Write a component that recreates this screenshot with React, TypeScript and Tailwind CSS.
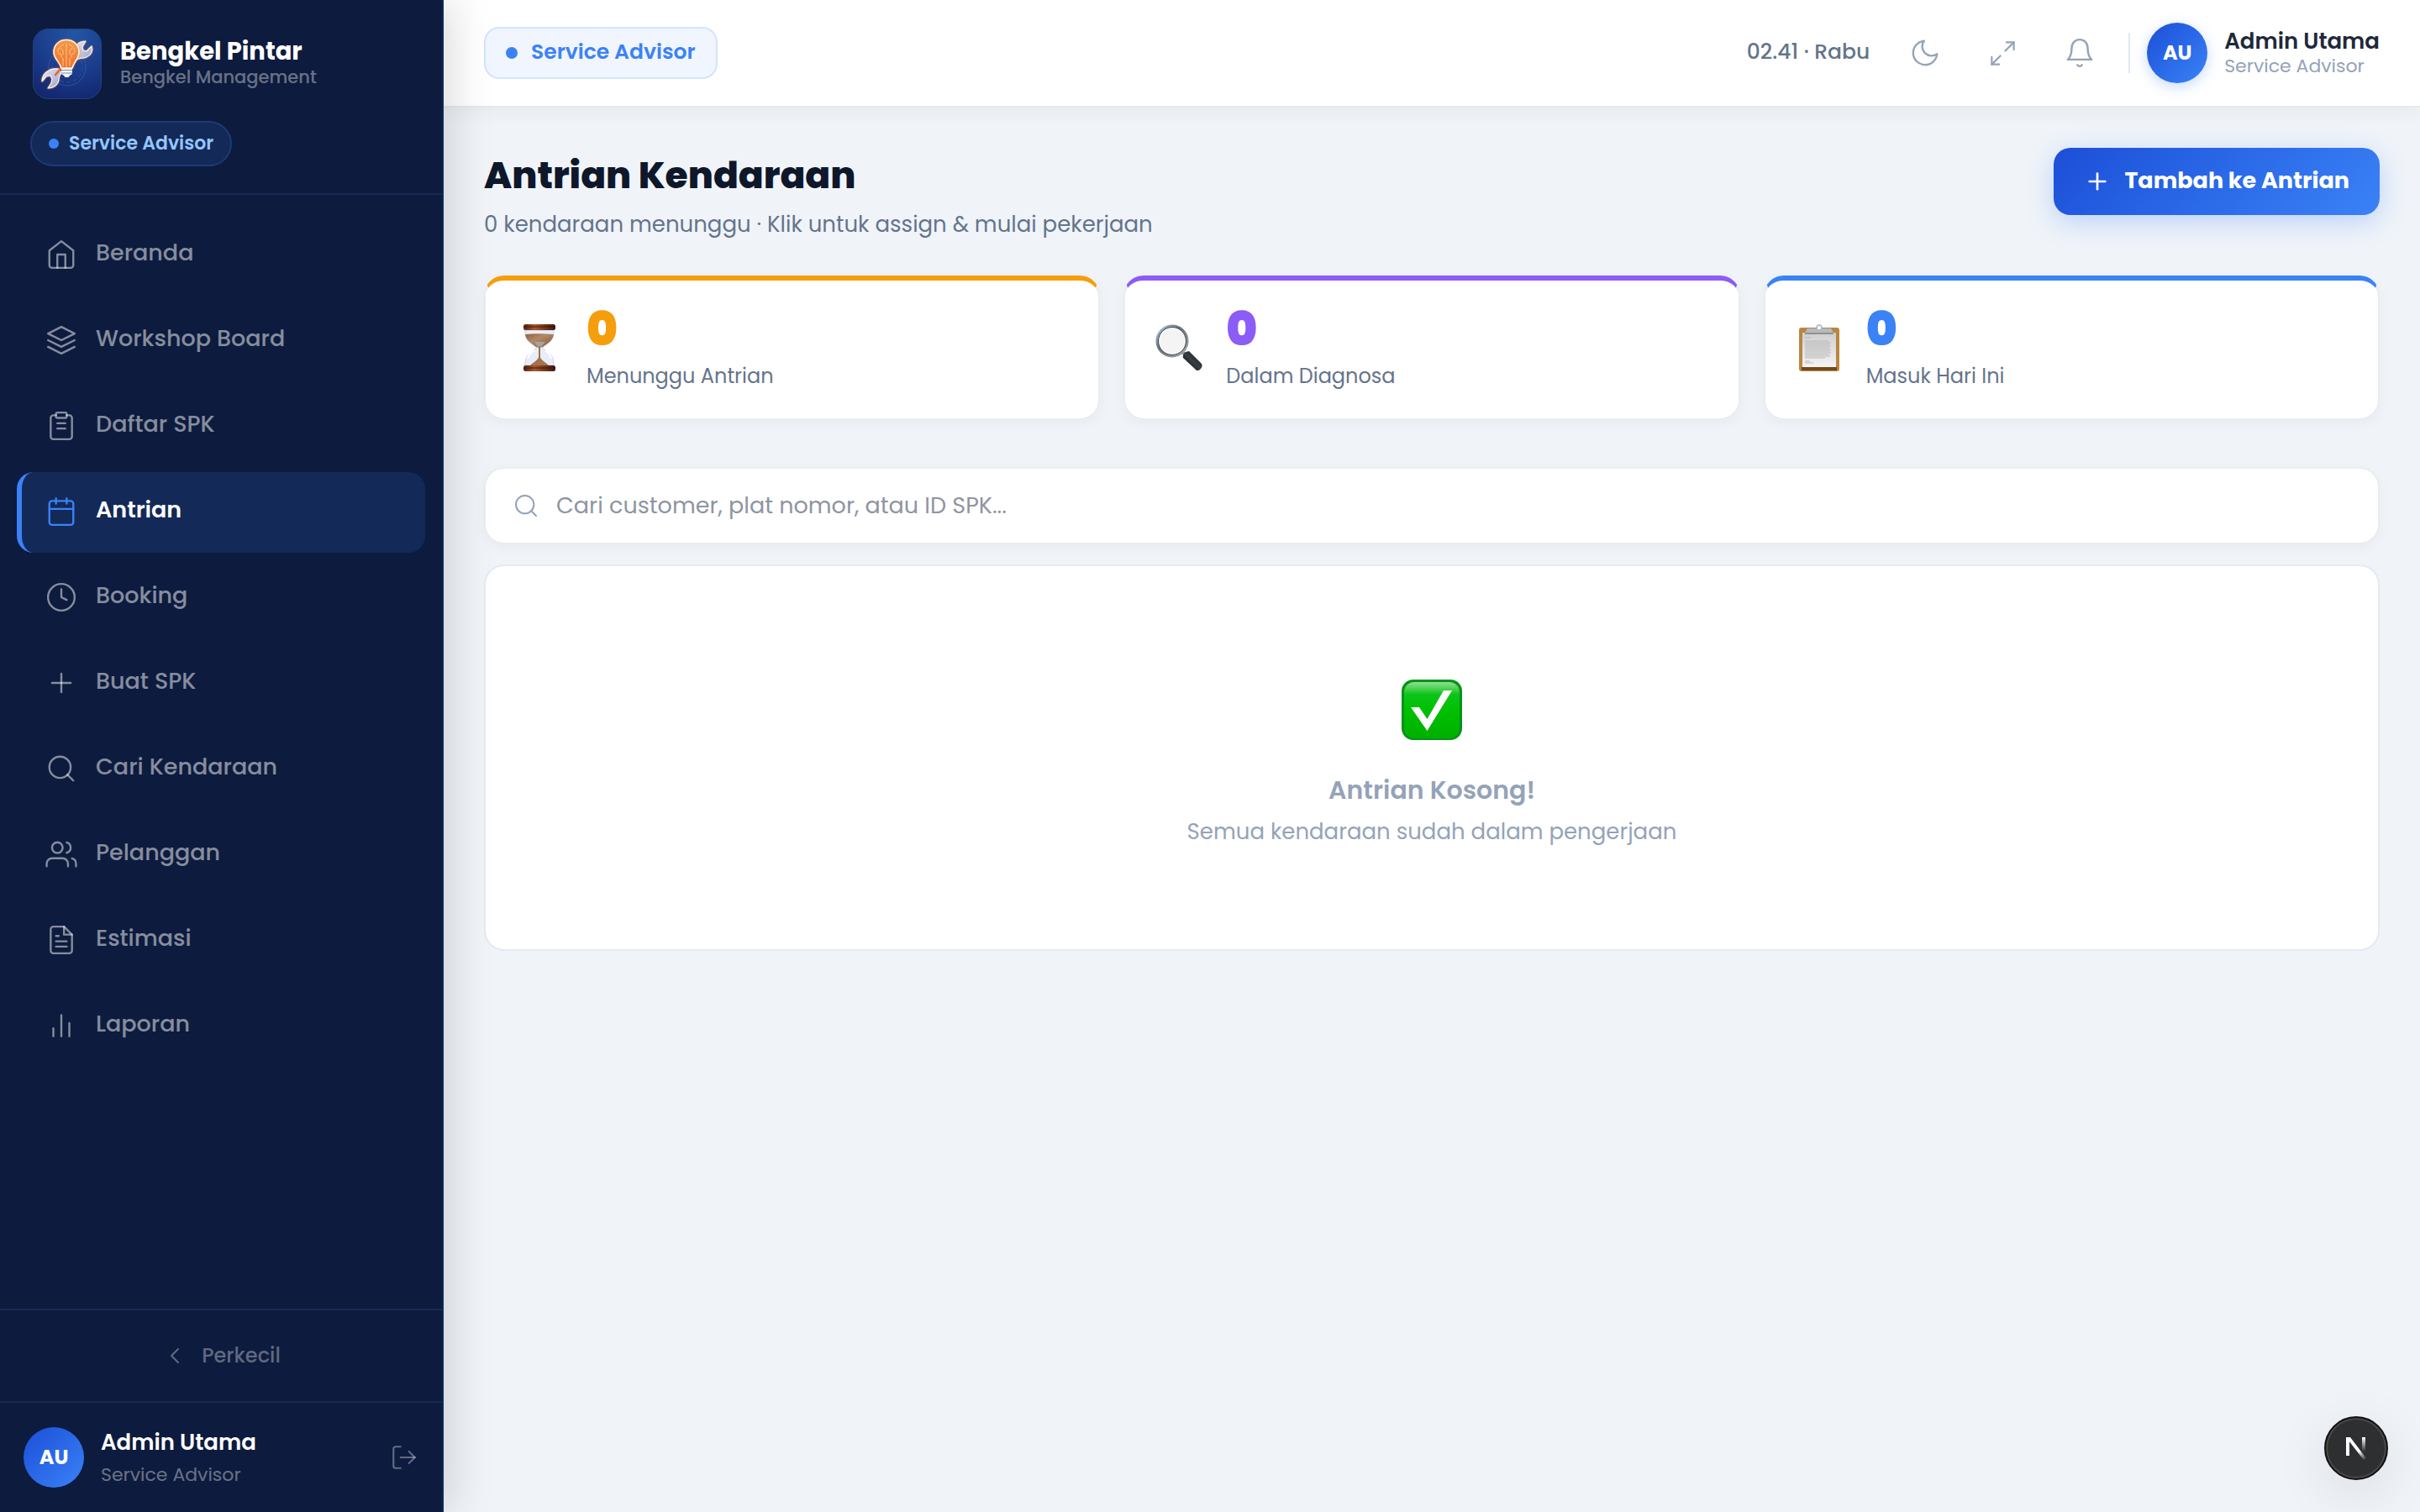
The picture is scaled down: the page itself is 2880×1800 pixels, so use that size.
import type { ReactNode, SVGProps } from "react";

type IconProps = SVGProps<SVGSVGElement>;

function Icon({ children, strokeWidth = 1.5, ...props }: IconProps) {
  return (
    <svg
      viewBox="0 0 24 24"
      fill="none"
      stroke="currentColor"
      strokeWidth={strokeWidth}
      strokeLinecap="round"
      strokeLinejoin="round"
      aria-hidden="true"
      {...props}
    >
      {children}
    </svg>
  );
}

const HomeIcon = (p: IconProps) => (
  <Icon {...p}>
    <path d="M3 9l9-7 9 7v11a2 2 0 0 1-2 2H5a2 2 0 0 1-2-2z" />
    <polyline points="9 22 9 12 15 12 15 22" />
  </Icon>
);

const LayersIcon = (p: IconProps) => (
  <Icon {...p}>
    <polygon points="12 2 2 7 12 12 22 7 12 2" />
    <polyline points="2 17 12 22 22 17" />
    <polyline points="2 12 12 17 22 12" />
  </Icon>
);

const ClipboardIcon = (p: IconProps) => (
  <Icon {...p}>
    <path d="M16 4h2a2 2 0 0 1 2 2v14a2 2 0 0 1-2 2H6a2 2 0 0 1-2-2V6a2 2 0 0 1 2-2h2" />
    <rect x="8" y="2" width="8" height="4" rx="1" />
    <path d="M9 10h6M9 14h6" />
  </Icon>
);

const CalendarIcon = (p: IconProps) => (
  <Icon {...p}>
    <rect x="3" y="4" width="18" height="18" rx="2" />
    <path d="M16 2v4M8 2v4M3 10h18" />
  </Icon>
);

const ClockIcon = (p: IconProps) => (
  <Icon {...p}>
    <circle cx="12" cy="12" r="10" />
    <polyline points="12 6 12 12 16 14" />
  </Icon>
);

const PlusIcon = (p: IconProps) => (
  <Icon {...p}>
    <path d="M12 5v14" />
    <path d="M5 12h14" />
  </Icon>
);

const SearchIcon = (p: IconProps) => (
  <Icon {...p}>
    <circle cx="11" cy="11" r="8" />
    <path d="M21 21l-4.35-4.35" />
  </Icon>
);

const UsersIcon = (p: IconProps) => (
  <Icon {...p}>
    <path d="M17 21v-2a4 4 0 0 0-4-4H5a4 4 0 0 0-4 4v2" />
    <circle cx="9" cy="7" r="4" />
    <path d="M23 21v-2a4 4 0 0 0-3-3.87M16 3.13a4 4 0 0 1 0 7.75" />
  </Icon>
);

const FileIcon = (p: IconProps) => (
  <Icon {...p}>
    <path d="M14 2H6a2 2 0 0 0-2 2v16a2 2 0 0 0 2 2h12a2 2 0 0 0 2-2V8z" />
    <polyline points="14 2 14 8 20 8" />
    <path d="M16 13H8M16 17H8M10 9H8" />
  </Icon>
);

const ChartIcon = (p: IconProps) => (
  <Icon {...p}>
    <path d="M18 20V10M12 20V4M6 20v-6" />
  </Icon>
);

const ChevronIcon = (p: IconProps) => (
  <Icon {...p}>
    <polyline points="15 18 9 12 15 6" />
  </Icon>
);

const LogoutIcon = (p: IconProps) => (
  <Icon {...p}>
    <path d="M9 21H5a2 2 0 0 1-2-2V5a2 2 0 0 1 2-2h4" />
    <polyline points="16 17 21 12 16 7" />
    <path d="M21 12H9" />
  </Icon>
);

const MoonIcon = (p: IconProps) => (
  <Icon {...p}>
    <path d="M21 12.79A9 9 0 1 1 11.21 3 7 7 0 0 0 21 12.79z" />
  </Icon>
);

const ExpandIcon = (p: IconProps) => (
  <Icon {...p}>
    <polyline points="15 3 21 3 21 9" />
    <polyline points="9 21 3 21 3 15" />
    <path d="M21 3l-7 7M3 21l7-7" />
  </Icon>
);

const BellIcon = (p: IconProps) => (
  <Icon {...p}>
    <path d="M18 8A6 6 0 0 0 6 8c0 7-3 9-3 9h18s-3-2-3-9" />
    <path d="M13.73 21a2 2 0 0 1-3.46 0" />
  </Icon>
);

/* Brand mark: light bulb crossed with a wrench */
function Logo() {
  return (
    <svg viewBox="0 0 82 84" className="h-[84px] w-[82px] shrink-0" aria-hidden="true">
      <defs>
        <radialGradient id="logo-bg" cx="0.6" cy="0.05" r="1">
          <stop offset="0" stopColor="#2257a4" />
          <stop offset="0.55" stopColor="#1b3d8c" />
          <stop offset="1" stopColor="#13276f" />
        </radialGradient>
        <linearGradient id="logo-bulb" x1="0" y1="0" x2="0" y2="1">
          <stop offset="0" stopColor="#f39a4a" />
          <stop offset="1" stopColor="#f0702c" />
        </linearGradient>
        <linearGradient id="logo-steel" x1="0" y1="0" x2="1" y2="1">
          <stop offset="0" stopColor="#e4e8f4" />
          <stop offset="1" stopColor="#98a3c6" />
        </linearGradient>
        <filter id="logo-glow" x="-30%" y="-30%" width="160%" height="160%">
          <feDropShadow dx="0" dy="0" stdDeviation="1.2" floodColor="#ff6a2c" floodOpacity="0.9" />
        </filter>
      </defs>
      <rect x="0.5" y="0.5" width="81" height="83" rx="18" fill="url(#logo-bg)" stroke="#24427c" />
      <circle cx="41" cy="46" r="22" fill="none" stroke="#3a66b8" strokeWidth="1" opacity="0.6" />
      <circle cx="41" cy="46" r="18" fill="none" stroke="#3a66b8" strokeWidth="1" strokeDasharray="5 3" opacity="0.5" />
      <g filter="url(#logo-glow)" fill="url(#logo-steel)" stroke="#fff1e6" strokeWidth="1.2" strokeLinejoin="round">
        <path d="M50 24c2-6 6-9 13-9l-4 7 1 4 4 1 6-6c2 6-1 11-6 13-4 2-9 0-13 4z" />
        <path d="M31 48c-4 0-8-1-12 2-6 3-8 8-8 13l5-6 5-1 2 4-1 5-4 6c7 0 12-4 13-10 0-4 1-6 3-8z" />
      </g>
      <path d="M27 55l6-7" stroke="#e8622c" strokeWidth="2.5" strokeLinecap="round" />
      <path
        d="M40 13.500c-9 0-15 6.500-15 14.500 0 8 7 11 9 19h13c2-8 8-11 8-19 0-8-6-14.500-15-14.500z"
        fill="url(#logo-bulb)"
        stroke="#fff1e2"
        strokeWidth="1.6"
        filter="url(#logo-glow)"
      />
      <path
        d="M40 18v28M37 19c-4 1-7 5-7 9M33 23l3 3v5M30 29l4 2v4M36 35v10M43 19c4 1 7 5 7 9M47 23l-3 3v5M50 29l-4 2v4M44 35v10"
        fill="none"
        stroke="#ffd08e"
        strokeWidth="0.9"
      />
      <path d="M34 47h13v7l-3 2-1.500 2h-4L37 56l-3-2z" fill="#f3f5fb" />
      <path d="M34 49.500h13M34 53h13" stroke="#66719a" strokeWidth="0.8" />
    </svg>
  );
}

function HourglassArt() {
  return (
    <svg viewBox="0 0 56 56" className="size-14 shrink-0" aria-hidden="true">
      <defs>
        <linearGradient id="hg-wood" x1="0" y1="0" x2="1" y2="0">
          <stop offset="0" stopColor="#54220f" />
          <stop offset="0.35" stopColor="#a9572f" />
          <stop offset="1" stopColor="#3d170b" />
        </linearGradient>
        <linearGradient id="hg-sand" x1="0" y1="0" x2="1" y2="1">
          <stop offset="0" stopColor="#8a6245" />
          <stop offset="0.4" stopColor="#b28a66" />
          <stop offset="1" stopColor="#7d5537" />
        </linearGradient>
      </defs>
      <path
        d="M11 7h34c1 11-6 16-13 20v2c7 4 14 9 13 20H11c-1-11 6-16 13-20v-2C17 23 10 18 11 7z"
        fill="#e9edf9"
        stroke="#c3cadc"
        strokeWidth="0.8"
      />
      <path d="M11 12c9-1 24-1 34 0-1 8-8 11-13 15-2 1-6 1-8 0-5-4-12-7-13-15z" fill="url(#hg-sand)" />
      <path d="M22 21h13l-5 6h-4z" fill="#aaa29c" />
      <path d="M27 26h2v13c1 4 6 6 10 10H17c4-4 9-6 10-10z" fill="#a1744a" />
      <path d="M14 41c1-5 4-8 8-10M42 41c-1-5-4-8-7-10" stroke="#ffffff" strokeWidth="2" fill="none" />
      <rect x="9" y="0" width="38" height="7" rx="2.5" fill="url(#hg-wood)" />
      <rect x="9" y="49" width="38" height="7" rx="2.5" fill="url(#hg-wood)" />
      <path d="M10 3h36M10 52h36" stroke="#2c1008" strokeWidth="0.8" />
    </svg>
  );
}

function MagnifierArt() {
  return (
    <svg viewBox="0 0 56 56" className="size-14 shrink-0" aria-hidden="true">
      <defs>
        <linearGradient id="mg-rim" x1="0" y1="0" x2="1" y2="1">
          <stop offset="0" stopColor="#a5cdf2" />
          <stop offset="0.4" stopColor="#6a7078" />
          <stop offset="1" stopColor="#a7abb0" />
        </linearGradient>
        <linearGradient id="mg-handle" x1="0" y1="1" x2="1" y2="0">
          <stop offset="0" stopColor="#000000" />
          <stop offset="0.5" stopColor="#3a3f45" />
          <stop offset="1" stopColor="#0c0d0f" />
        </linearGradient>
      </defs>
      <path d="M32 33l5 5" stroke="#8a8e93" strokeWidth="4" />
      <path d="M36 33l4-1 15 15c2 3-2 9-6 8L33 40c-1-2 1-6 3-7z" fill="url(#mg-handle)" />
      <circle cx="20" cy="20" r="18" fill="#f4f4f5" stroke="url(#mg-rim)" strokeWidth="3" />
      <circle cx="20" cy="20" r="16.5" fill="none" stroke="#3f444b" strokeWidth="1" />
    </svg>
  );
}

function ClipboardArt() {
  return (
    <svg viewBox="0 0 56 56" className="size-14 shrink-0" aria-hidden="true">
      <defs>
        <linearGradient id="cb-paper" x1="0" y1="0" x2="0" y2="1">
          <stop offset="0" stopColor="#cfcfd0" />
          <stop offset="1" stopColor="#f4f4f5" />
        </linearGradient>
      </defs>
      <rect x="4" y="4" width="48" height="52" rx="3" fill="#b98640" />
      <path d="M7 51h42v4H7z" fill="#74491e" />
      <rect x="8" y="10" width="40" height="41" fill="url(#cb-paper)" />
      <path
        d="M11 16h7M11 20h28M11 22h31M11 24h30M11 26h31M11 28h29M11 30h31M11 32h30M11 34h31M11 36h29M11 38h30M11 40h24M11 44h6M11 46h10"
        stroke="#b4b4b6"
        strokeWidth="0.9"
      />
      <path d="M14 5h28l3 5v2H11v-2z" fill="#b4bac0" />
      <path d="M11 11h34" stroke="#70695f" strokeWidth="1.2" />
      <circle cx="28" cy="4" r="3" fill="#ffffff" stroke="#a9b6c4" strokeWidth="1.6" />
    </svg>
  );
}

function CheckArt() {
  return (
    <svg viewBox="0 0 72 72" className="size-[72px]" aria-hidden="true">
      <defs>
        <linearGradient id="ck-face" x1="0" y1="0" x2="0" y2="1">
          <stop offset="0" stopColor="#8fe08f" />
          <stop offset="0.22" stopColor="#0cc41a" />
          <stop offset="0.5" stopColor="#00c000" />
          <stop offset="1" stopColor="#00b000" />
        </linearGradient>
      </defs>
      <rect width="72" height="72" rx="14" fill="#06921a" />
      <rect x="3" y="3" width="66" height="67" rx="12" fill="url(#ck-face)" />
      <path d="M11 33h10l9.500 14L50 13h10L30.500 61z" fill="#ffffff" />
    </svg>
  );
}

const NAV_ITEMS = [
  { label: "Beranda", icon: HomeIcon },
  { label: "Workshop Board", icon: LayersIcon },
  { label: "Daftar SPK", icon: ClipboardIcon },
  { label: "Antrian", icon: CalendarIcon, active: true },
  { label: "Booking", icon: ClockIcon },
  { label: "Buat SPK", icon: PlusIcon },
  { label: "Cari Kendaraan", icon: SearchIcon },
  { label: "Pelanggan", icon: UsersIcon },
  { label: "Estimasi", icon: FileIcon },
  { label: "Laporan", icon: ChartIcon },
];

function Avatar({ className = "" }: { className?: string }) {
  return (
    <div
      className={`flex size-[72px] shrink-0 items-center justify-center rounded-full bg-linear-135 from-[#1d4ed8] to-[#3b82f6] text-2xl font-bold text-white ${className}`}
    >
      AU
    </div>
  );
}

function Sidebar() {
  return (
    <aside className="relative z-10 flex w-[528px] shrink-0 flex-col border-r-2 border-[#122957] bg-[#0d1b3e] shadow-[8px_0_48px_rgba(0,0,0,0.15)]">
      {/* Brand */}
      <div className="border-b-2 border-[#172a54] px-9 pt-[34px] pb-8">
        <div className="flex items-center gap-[22px] pl-[3px]">
          <Logo />
          <div>
            <div className="text-[29px] leading-8 font-bold text-white">Bengkel Pintar</div>
            <div className="text-[21px] leading-[30px] font-medium text-white/40">Bengkel Management</div>
          </div>
        </div>
        <div className="mt-[26px] flex h-[54px] w-fit items-center gap-3 rounded-full border-2 border-[#1c3a77] bg-[#132957] px-5">
          <span className="size-3 rounded-full bg-[#3b82f6]" />
          <span className="text-[22px] leading-8 font-semibold text-[#93c5fd]">Service Advisor</span>
        </div>
      </div>

      {/* Menu */}
      <nav className="flex flex-1 flex-col gap-1.5 px-5 py-6">
        {NAV_ITEMS.map(({ label, icon: ItemIcon, active }) => (
          <a
            key={label}
            href="#"
            className={`flex h-24 items-center gap-[22px] rounded-[20px] border-l-6 pb-0.5 pl-7 text-[27px] ${
              active
                ? "border-[#3b82f6] bg-[#132957] font-semibold text-white"
                : "border-transparent font-medium text-white/50"
            }`}
          >
            <ItemIcon className={`size-[38px] ${active ? "text-[#3b82f6]" : ""}`} />
            <span className="pb-1">{label}</span>
          </a>
        ))}
      </nav>

      <div className="flex h-[110px] items-center border-t-2 border-[#172a54]">
        <button
          type="button"
          className="flex w-full items-center justify-center gap-4 text-2xl font-medium text-white/35"
        >
          <ChevronIcon className="size-8" />
          Perkecil
        </button>
      </div>

      {/* Signed-in user */}
      <div className="flex h-[132px] items-center gap-5 border-t-2 border-[#172a54] px-7">
        <Avatar />
        <div className="flex-1 pt-1.5">
          <div className="text-[26px] leading-9 font-semibold text-white">Admin Utama</div>
          <div className="text-[22px] leading-[42px] text-white/40">Service Advisor</div>
        </div>
        <button type="button" aria-label="Keluar" className="text-white/35">
          <LogoutIcon className="size-[34px]" />
        </button>
      </div>
    </aside>
  );
}

function HeaderButton({ label, children }: { label: string; children: ReactNode }) {
  return (
    <button type="button" aria-label={label} className="flex size-[76px] items-center justify-center text-[#94a3b8]">
      {children}
    </button>
  );
}

function Header() {
  return (
    <header className="flex h-32 shrink-0 items-center justify-between border-b-2 border-[#e6eaef] bg-white px-12 shadow-[0_2px_24px_rgba(0,0,0,0.06)]">
      <div className="flex h-[62px] items-center gap-4 rounded-[18px] border-2 border-[#d4e4fd] bg-[#f0f5fe] px-6">
        <span className="size-3.5 rounded-full bg-[#3b82f6]" />
        <span className="pb-0.5 text-[25px] font-semibold text-[#3b82f6]">Service Advisor</span>
      </div>

      <div className="flex items-center gap-4">
        <span className="pr-3 pb-0.5 text-[25px] font-medium text-[#64748b]">02.41 · Rabu</span>
        <HeaderButton label="Mode gelap">
          <MoonIcon className="size-[38px]" />
        </HeaderButton>
        <HeaderButton label="Layar penuh">
          <ExpandIcon className="size-[35px]" />
        </HeaderButton>
        <HeaderButton label="Notifikasi">
          <BellIcon className="size-[38px]" />
        </HeaderButton>
        <div className="mx-1 h-12 w-0.5 bg-[#e2e8f0]" />
        <div className="flex items-center gap-5">
          <Avatar className="shadow-[0_4px_16px_rgba(59,130,246,0.3)]" />
          <div>
            <div className="text-[26px] leading-8 font-semibold text-[#1e293b]">Admin Utama</div>
            <div className="text-[22px] leading-7 text-[#94a3b8]">Service Advisor</div>
          </div>
        </div>
      </div>
    </header>
  );
}

type StatCardProps = {
  value: number;
  label: string;
  art: ReactNode;
  accent: string;
};

function StatCard({ value, label, art, accent }: StatCardProps) {
  return (
    <div
      className={`flex h-[172px] items-center gap-7 rounded-3xl border-2 border-t-6 border-[#e9edf2] bg-white px-9 pb-1 shadow-[0_4px_16px_rgba(0,0,0,0.04)] ${accent}`}
    >
      {art}
      <div>
        <div className="text-[56px] leading-[60px] font-black">{value}</div>
        <div className="pt-2 text-2xl leading-9 text-[#64748b]">{label}</div>
      </div>
    </div>
  );
}

export default function App() {
  return (
    <div className="flex min-h-screen bg-[#f0f4f9] font-['Poppins','Inter',sans-serif]">
      <Sidebar />

      <div className="flex min-w-0 flex-1 flex-col">
        <Header />

        <main className="px-12 pt-12">
          <div className="flex items-start justify-between">
            <div>
              <h1 className="text-[44px] leading-[66px] font-extrabold text-[#0f172a]">Antrian Kendaraan</h1>
              <p className="text-[26px] leading-[50px] text-[#64748b]">
                0 kendaraan menunggu · Klik untuk assign &amp; mulai pekerjaan
              </p>
            </div>
            <button
              type="button"
              className="flex h-20 items-center gap-4 rounded-[20px] bg-linear-135 from-[#1d4ed8] to-[#3b82f6] px-9 text-[27px] font-bold text-white shadow-[0_8px_32px_rgba(59,130,246,0.3)]"
            >
              <PlusIcon className="size-8" strokeWidth={2} />
              <span className="pb-0.5">Tambah ke Antrian</span>
            </button>
          </div>

          {/* Queue counters */}
          <div className="mt-9 grid grid-cols-3 gap-7">
            <StatCard value={0} label="Menunggu Antrian" art={<HourglassArt />} accent="border-t-[#f59e0b] text-[#f59e0b]" />
            <StatCard value={0} label="Dalam Diagnosa" art={<MagnifierArt />} accent="border-t-[#8b5cf6] text-[#8b5cf6]" />
            <StatCard value={0} label="Masuk Hari Ini" art={<ClipboardArt />} accent="border-t-[#3b82f6] text-[#3b82f6]" />
          </div>

          <label className="mt-14 flex h-[92px] items-center gap-5 rounded-3xl border-2 border-[#e9edf2] bg-white px-8 shadow-[0_4px_16px_rgba(0,0,0,0.04)]">
            <SearchIcon className="size-8 shrink-0 text-[#94a3b8]" />
            <input
              type="text"
              aria-label="Cari antrian"
              placeholder="Cari customer, plat nomor, atau ID SPK..."
              className="w-full bg-transparent text-[27px] text-[#1e293b] outline-none placeholder:text-[#8e95a2]"
            />
          </label>

          {/* Empty state */}
          <section className="mt-6 flex h-[460px] flex-col items-center rounded-3xl border-2 border-[#e5eaf0] bg-white pt-[135px] text-[#94a3b8]">
            <CheckArt />
            <h2 className="mt-9 text-[30px] leading-[48px] font-semibold">Antrian Kosong!</h2>
            <p className="text-[26px] leading-[50px]">Semua kendaraan sudah dalam pengerjaan</p>
          </section>
        </main>
      </div>

      {/* Dev tools badge */}
      <button
        type="button"
        aria-label="Open Next.js Dev Tools"
        className="fixed right-[38px] bottom-[38px] z-20 flex size-[76px] items-center justify-center rounded-full border-2 border-[#111111] bg-[#2e2f30] shadow-[inset_0_0_0_2px_#4a4a4a,0_16px_64px_rgba(0,0,0,0.1)]"
      >
        <svg viewBox="0 0 26 28" className="h-7 w-[26px]" aria-hidden="true">
          <defs>
            <linearGradient id="nx-diag" x1="12" y1="14" x2="24" y2="28" gradientUnits="userSpaceOnUse">
              <stop offset="0.3" stopColor="#ffffff" />
              <stop offset="1" stopColor="#ffffff" stopOpacity="0" />
            </linearGradient>
            <linearGradient id="nx-bar" x1="0" y1="0" x2="0" y2="1">
              <stop offset="0" stopColor="#ffffff" />
              <stop offset="1" stopColor="#ffffff" stopOpacity="0" />
            </linearGradient>
          </defs>
          <rect x="1" y="1" width="4" height="22" fill="#ffffff" />
          <path d="M1 1h5l19 25-3 2L1 1z" fill="url(#nx-diag)" />
          <rect x="20" y="1" width="4" height="17" fill="url(#nx-bar)" />
        </svg>
      </button>
    </div>
  );
}
